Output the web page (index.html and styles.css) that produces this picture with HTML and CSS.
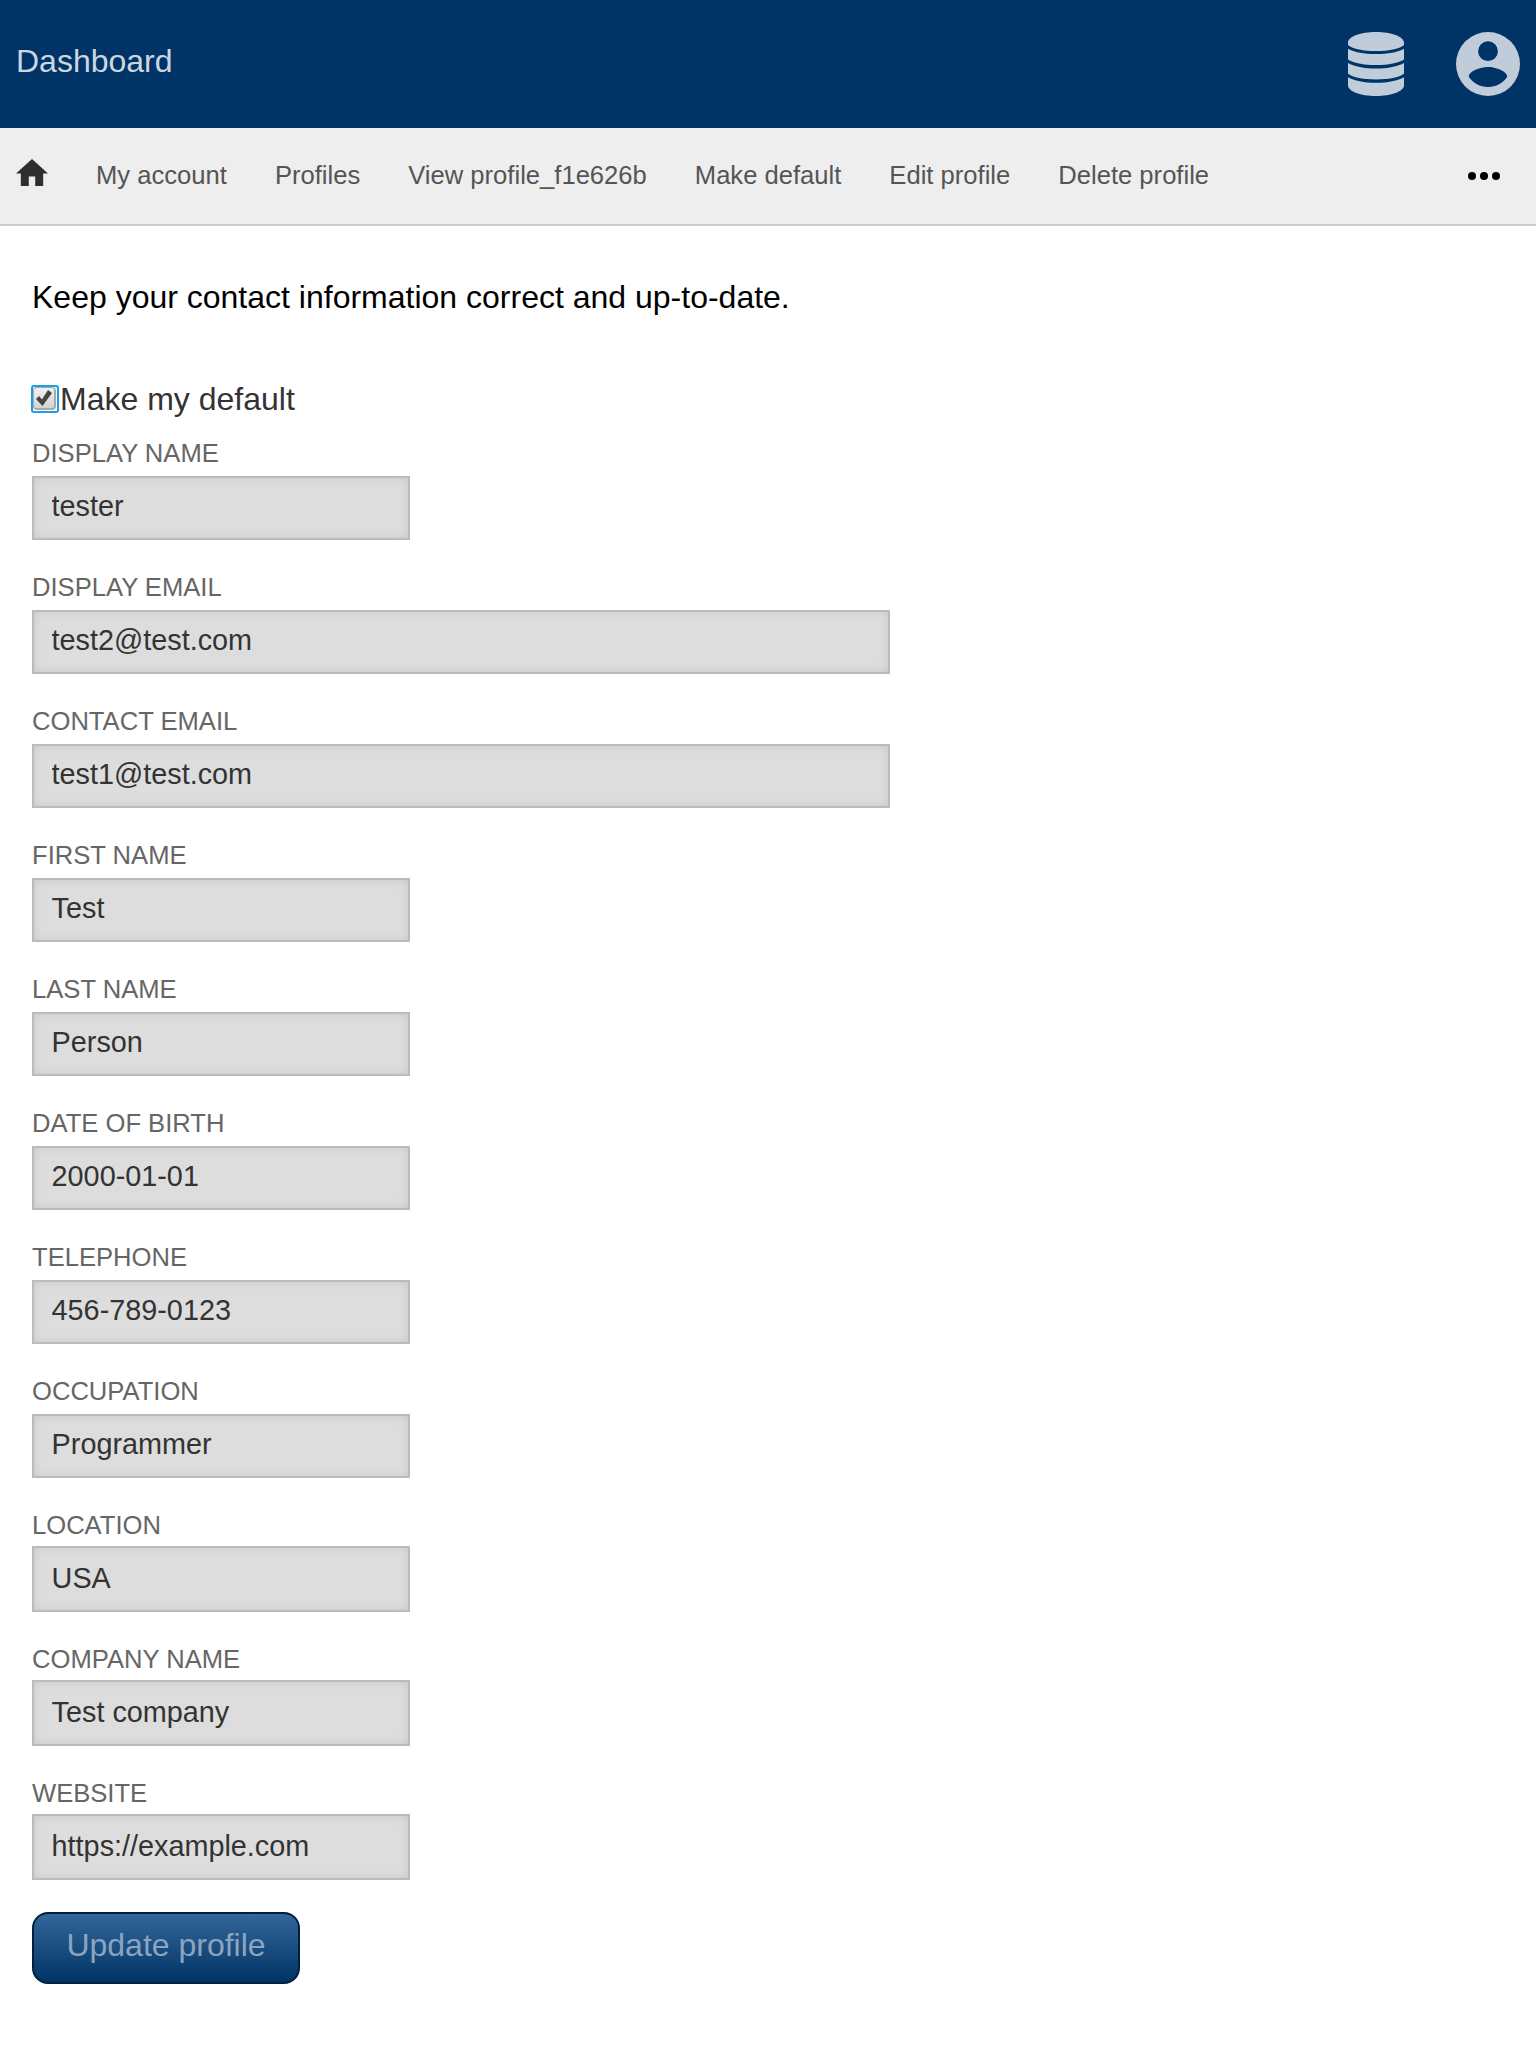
FILE: index.html
```html
<!DOCTYPE html>
<html lang="en">
<head>
<meta charset="utf-8">
<title>Dashboard</title>
<link rel="stylesheet" href="styles.css">
</head>
<body>
<header class="header">
  <a class="header-title">Dashboard</a>
  <div class="header-icons">
    <svg class="icon-db" viewBox="0 0 56 64" width="56" height="64"><path d="M28 0C12.500 0 0 4.800 0 10.500V13C5 17 15.500 19 28 19S51 17 56 13V10.500C56 4.800 43.500 0 28 0ZM0 16.700V27.500C5 31 15.500 33 28 33S51 31 56 27.500V16.700C50 20 40 22 28 22S6 20 0 16.700ZM0 31V41.800C5 45.500 15.500 47.500 28 47.500S51 45.500 56 41.800V31C50 34.500 40 36.500 28 36.500S6 34.500 0 31ZM0 45.300V53.500C0 59.200 12.500 64 28 64S56 59.200 56 53.500V45.300C50 48.800 40 50.800 28 50.800S6 48.800 0 45.300Z"/></svg>
    <svg class="icon-user" viewBox="2 2 20 20" width="64" height="64"><path d="M12 2a10 10 0 1 0 0 20a10 10 0 0 0 0-20zM12 4.900a3.100 3.100 0 1 1 0 6.200a3.100 3.100 0 0 1 0-6.200zM12 19.200c-2.500 0-4.710-1.280-6-3.220c.03-1.990 4-3.080 6-3.080s5.970 1.090 6 3.080c-1.290 1.940-3.500 3.220-6 3.220z"/></svg>
  </div>
</header>
<nav class="nav">
  <svg class="icon-home" viewBox="2 3 20 17" width="32" height="27.200"><path d="M10 20v-6h4v6h5v-8h3L12 3 2 12h3v8z"/></svg>
  <a>My account</a><a>Profiles</a><a>View profile_f1e626b</a><a>Make default</a><a>Edit profile</a><a>Delete profile</a>
  <svg class="icon-more" viewBox="0 0 32 8" width="32" height="8"><circle cx="4" cy="4" r="4"/><circle cx="16" cy="4" r="4"/><circle cx="28" cy="4" r="4"/></svg>
</nav>
<main class="main">
  <p class="intro">Keep your contact information correct and up-to-date.</p>
  <form>
    <label class="check"><span class="checkbox"><span class="checkbox-face"><svg viewBox="0 0 16 16" width="16" height="16"><path d="M0 9L3 6L6 9.500L12 0L16 3L6.500 16Z"/></svg></span></span>Make my default</label>
    <div class="field"><label>Display name</label><input type="text" value="tester"></div>
    <div class="field wide"><label>Display email</label><input type="text" value="test2@test.com"></div>
    <div class="field wide"><label>Contact email</label><input type="text" value="test1@test.com"></div>
    <div class="field"><label>First name</label><input type="text" value="Test"></div>
    <div class="field"><label>Last name</label><input type="text" value="Person"></div>
    <div class="field"><label>Date of birth</label><input type="text" value="2000-01-01"></div>
    <div class="field"><label>Telephone</label><input type="text" value="456-789-0123"></div>
    <div class="field"><label>Occupation</label><input type="text" value="Programmer"></div>
    <div class="field tall"><label>Location</label><input type="text" value="USA"></div>
    <div class="field tall"><label>Company name</label><input type="text" value="Test company"></div>
    <div class="field tall"><label>Website</label><input type="text" value="https://example.com"></div>
    <button class="submit" type="button">Update profile</button>
  </form>
</main>
</body>
</html>
```
FILE: styles.css
```css
* { box-sizing: border-box; }
body { margin: 0; background: #fff; font-family: "Liberation Sans", Arial, sans-serif; font-size: 32px; color: #333; }
.header { display: flex; align-items: center; justify-content: space-between; height: 128px; padding: 0 16px; background: #036; }
.header-title { color: #ccd6e0; line-height: 36px; margin-bottom: 6px; }
.header-icons { display: flex; gap: 52px; fill: #c0ccd9; }
.nav { display: flex; align-items: center; gap: 48px; height: 98px; padding: 0 36px 0 16px; background: #eee; border-bottom: 2px solid #ccc; font-size: 25.6px; color: #555; }
.nav a { line-height: 30px; margin-bottom: 2px; }
.icon-home { fill: #2e2e2e; margin-bottom: 7px; }
.icon-more { margin-left: auto; }
.main { padding: 47px 32px 0; }
.intro { margin: 0; line-height: 48px; color: #000; }
.check { display: flex; align-items: center; height: 48px; margin: 54px 0 11px; }
.checkbox { display: flex; width: 28px; height: 28px; margin: 0 1px 0 -1px; border: 2px solid #1a9fe8; border-radius: 3px; background: #fff; }
.checkbox-face { display: flex; width: 23px; height: 23px; padding: 2px; border: 1px solid #aaa; border-right-width: 2px; border-bottom-width: 2px; border-radius: 4px; background: linear-gradient(#f0f0f0, #d4d4d4); }
.checkbox svg { fill: #444; flex: none; }
.field { display: flex; flex-direction: column; height: 134px; }
.field label { height: 42px; padding-top: 4px; line-height: 30px; font-size: 25.6px; color: #666; text-transform: uppercase; }
.field input { width: 378px; height: 64px; padding: 0 17.600px 4px; border: 2px solid #bbb; border-radius: 0; background: #ddd; box-shadow: inset 0 0 10px #c8c8c8; font: 28.8px/32px "Liberation Sans", Arial, sans-serif; color: #333; outline: none; }
.wide input { width: 858px; }
.tall label { height: 40px; }
.tall input { height: 66px; padding-bottom: 2px; }
.submit { display: block; width: 268px; height: 72px; margin-top: 4px; padding: 0 0 6px; border: 2px solid #00203f; border-radius: 16px; background: linear-gradient(#369, #036); font: 32px/36px "Liberation Sans", Arial, sans-serif; color: #8ba5c0; }
```
